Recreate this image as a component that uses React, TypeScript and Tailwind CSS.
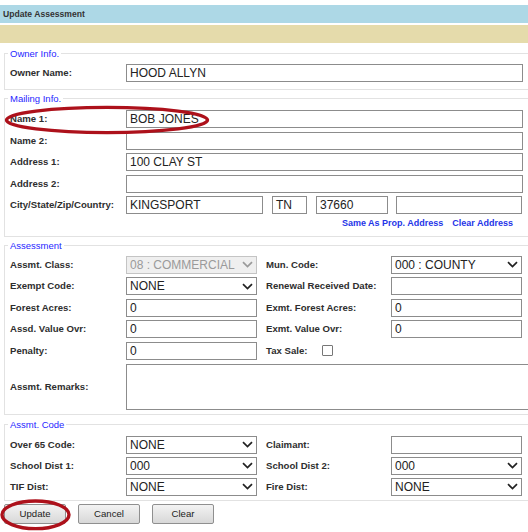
import React from "react";

const lbl = "font-bold text-[9.6px] text-[#2e2e2e] leading-[12px] shrink-0";
const legendCls = "ml-[-2px] px-[2px] text-[9.5px] leading-[13px] text-[#1f1fff]";
const fsCls = "ml-[4px] w-[540px] border border-[#e2e2e2] pl-[5px] pr-0";

function TextBox({ w, value = "" }: { w: string; value?: string }) {
  return (
    <div
      className={`${w} h-[18px] shrink-0 border border-[#8c8c8c] bg-white pl-[3px] text-[12px] leading-[16px] text-[#222] whitespace-nowrap overflow-hidden`}
    >
      {value}
    </div>
  );
}

function Chevron({ color = "#222" }: { color?: string }) {
  return (
    <svg width="11" height="7" viewBox="0 0 11 7" className="shrink-0">
      <path d="M1 1.2 L5.5 5.6 L10 1.2" fill="none" stroke={color} strokeWidth="1.7" />
    </svg>
  );
}

function Select({ w, value, disabled = false }: { w: string; value: string; disabled?: boolean }) {
  return (
    <div
      className={`${w} h-[18px] shrink-0 flex items-center justify-between pl-[3px] pr-[3px] text-[12px] leading-[16px] whitespace-nowrap overflow-hidden border ${
        disabled ? "border-[#c4c4c4] bg-[#efefef] text-[#9a9a9a]" : "border-[#8c8c8c] bg-white text-[#222]"
      }`}
    >
      <span>{value}</span>
      <Chevron color={disabled ? "#9a9a9a" : "#222"} />
    </div>
  );
}

function Row({ children }: { children: React.ReactNode }) {
  return <div className="flex items-center h-[18px]">{children}</div>;
}

function Btn({ children }: { children: React.ReactNode }) {
  return (
    <div className="w-[62px] h-[20px] flex items-center justify-center border border-[#8f8f8f] rounded-[2px] bg-linear-to-b from-[#f3f3f3] to-[#d8d8d8] text-[9.6px] text-[#222]">
      {children}
    </div>
  );
}

export default function App() {
  return (
    <div className="relative w-[528px] h-[532px] overflow-hidden bg-white font-['Liberation_Sans',Arial,sans-serif]">
      <div className="pt-[5px]">
        <div className="h-[18px] bg-[#ADD8E6] flex items-center pl-[3px] font-bold text-[8.6px] text-[#333]">
          Update Assessment
        </div>
        <div className="mt-[2px] h-[18px] bg-[#E5DBAB]" />
      </div>

      {/* Owner Info */}
      <fieldset className={`${fsCls} mt-[3.5px] pt-[4.5px] pb-[7px]`}>
        <legend className={legendCls}>Owner Info.</legend>
        <Row>
          <span className={`${lbl} w-[116px]`}>Owner Name:</span>
          <TextBox w="w-[397px]" value="HOOD ALLYN" />
        </Row>
      </fieldset>

      {/* Mailing Info */}
      <fieldset className={`${fsCls} mt-[1.5px] pt-[5.5px] pb-[5.5px]`}>
        <legend className={legendCls}>Mailing Info.</legend>
        <div className="flex flex-col gap-[3.6px]">
          <Row>
            <span className={`${lbl} w-[116px]`}>Name 1:</span>
            <TextBox w="w-[397px]" value="BOB JONES" />
          </Row>
          <Row>
            <span className={`${lbl} w-[116px]`}>Name 2:</span>
            <TextBox w="w-[397px]" />
          </Row>
          <Row>
            <span className={`${lbl} w-[116px]`}>Address 1:</span>
            <TextBox w="w-[397px]" value="100 CLAY ST" />
          </Row>
          <Row>
            <span className={`${lbl} w-[116px]`}>Address 2:</span>
            <TextBox w="w-[397px]" />
          </Row>
          <Row>
            <span className={`${lbl} w-[116px]`}>City/State/Zip/Country:</span>
            <TextBox w="w-[137px]" value="KINGSPORT" />
            <div className="w-[9px] shrink-0" />
            <TextBox w="w-[35px]" value="TN" />
            <div className="w-[9px] shrink-0" />
            <TextBox w="w-[72px]" value="37660" />
            <div className="w-[8px] shrink-0" />
            <TextBox w="w-[126px]" />
          </Row>
        </div>
        <div className="mt-[3px] w-[503px] flex justify-end gap-[9px] font-bold text-[9px] leading-[13px] text-[#2535e8]">
          <span>Same As Prop. Address</span>
          <span>Clear Address</span>
        </div>
      </fieldset>

      {/* Assessment */}
      <fieldset className={`${fsCls} mt-[2px] pt-[4px] pb-[4px]`}>
        <legend className={legendCls}>Assessment</legend>
        <div className="flex flex-col gap-[3.5px]">
          <Row>
            <span className={`${lbl} w-[116px]`}>Assmt. Class:</span>
            <Select w="w-[131px]" value="08 : COMMERCIAL" disabled />
            <div className="w-[9px] shrink-0" />
            <span className={`${lbl} w-[125px]`}>Mun. Code:</span>
            <Select w="w-[131px]" value="000 : COUNTY" />
          </Row>
          <Row>
            <span className={`${lbl} w-[116px]`}>Exempt Code:</span>
            <Select w="w-[131px]" value="NONE" />
            <div className="w-[9px] shrink-0" />
            <span className={`${lbl} w-[125px]`}>Renewal Received Date:</span>
            <TextBox w="w-[131px]" />
          </Row>
          <Row>
            <span className={`${lbl} w-[116px]`}>Forest Acres:</span>
            <TextBox w="w-[131px]" value="0" />
            <div className="w-[9px] shrink-0" />
            <span className={`${lbl} w-[125px]`}>Exmt. Forest Acres:</span>
            <TextBox w="w-[131px]" value="0" />
          </Row>
          <Row>
            <span className={`${lbl} w-[116px]`}>Assd. Value Ovr:</span>
            <TextBox w="w-[131px]" value="0" />
            <div className="w-[9px] shrink-0" />
            <span className={`${lbl} w-[125px]`}>Exmt. Value Ovr:</span>
            <TextBox w="w-[131px]" value="0" />
          </Row>
          <Row>
            <span className={`${lbl} w-[116px]`}>Penalty:</span>
            <TextBox w="w-[131px]" value="0" />
            <div className="w-[9px] shrink-0" />
            <span className={`${lbl} w-[56px]`}>Tax Sale:</span>
            <div className="w-[11px] h-[11px] shrink-0 border border-[#777] rounded-[1px] bg-white" />
          </Row>
        </div>
        <div className="mt-[4px] flex items-center">
          <span className={`${lbl} w-[116px]`}>Assmt. Remarks:</span>
          <div className="w-[410px] h-[46px] shrink-0 border border-[#8c8c8c] bg-white" />
        </div>
      </fieldset>

      {/* Assmt. Code */}
      <fieldset className={`${fsCls} mt-[3.5px] pt-[4.5px] pb-[4px]`}>
        <legend className={legendCls}>Assmt. Code</legend>
        <div className="flex flex-col gap-[3px]">
          <Row>
            <span className={`${lbl} w-[116px]`}>Over 65 Code:</span>
            <Select w="w-[131px]" value="NONE" />
            <div className="w-[9px] shrink-0" />
            <span className={`${lbl} w-[125px]`}>Claimant:</span>
            <TextBox w="w-[131px]" />
          </Row>
          <Row>
            <span className={`${lbl} w-[116px]`}>School Dist 1:</span>
            <Select w="w-[131px]" value="000" />
            <div className="w-[9px] shrink-0" />
            <span className={`${lbl} w-[125px]`}>School Dist 2:</span>
            <Select w="w-[131px]" value="000" />
          </Row>
          <Row>
            <span className={`${lbl} w-[116px]`}>TIF Dist:</span>
            <Select w="w-[131px]" value="NONE" />
            <div className="w-[9px] shrink-0" />
            <span className={`${lbl} w-[125px]`}>Fire Dist:</span>
            <Select w="w-[131px]" value="NONE" />
          </Row>
        </div>
      </fieldset>

      <div className="mt-[3.5px] ml-[4px] flex gap-[12px]">
        <Btn>Update</Btn>
        <Btn>Cancel</Btn>
        <Btn>Clear</Btn>
      </div>

      {/* red annotation ellipses */}
      <svg className="absolute left-0 top-0 pointer-events-none" width="528" height="532">
        <ellipse cx="107" cy="120" rx="100.5" ry="12.6" fill="none" stroke="#ad111b" strokeWidth="3.4" />
        <ellipse cx="35.5" cy="514.8" rx="33.5" ry="13.8" fill="none" stroke="#ad111b" strokeWidth="3.4" />
      </svg>
    </div>
  );
}
